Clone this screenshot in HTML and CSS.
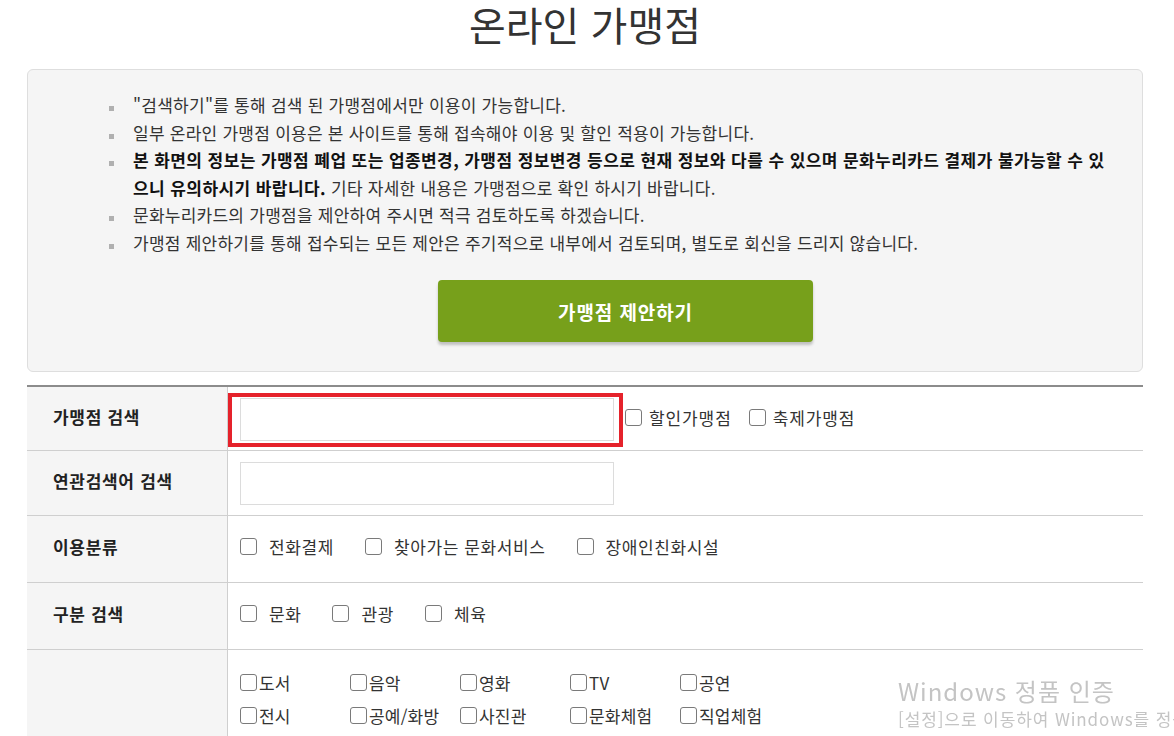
FILE: index.html
```html
<!DOCTYPE html>
<html lang="ko">
<head>
<meta charset="utf-8">
<title>온라인 가맹점</title>
<link rel="stylesheet" href="styles.css">
</head>
<body>
<div class="page">
  <h1 class="title">온라인 가맹점</h1>

  <div class="notice">
    <ul class="notice-list">
      <li>"검색하기"를 통해 검색 된 가맹점에서만 이용이 가능합니다.</li>
      <li>일부 온라인 가맹점 이용은 본 사이트를 통해 접속해야 이용 및 할인 적용이 가능합니다.</li>
      <li><strong>본 화면의 정보는 가맹점 폐업 또는 업종변경, 가맹점 정보변경 등으로 현재 정보와 다를 수 있으며 문화누리카드 결제가 불가능할 수 있으니 유의하시기 바랍니다.</strong> 기타 자세한 내용은 가맹점으로 확인 하시기 바랍니다.</li>
      <li>문화누리카드의 가맹점을 제안하여 주시면 적극 검토하도록 하겠습니다.</li>
      <li>가맹점 제안하기를 통해 접수되는 모든 제안은 주기적으로 내부에서 검토되며, 별도로 회신을 드리지 않습니다.</li>
    </ul>
    <div class="notice-action">
      <a class="btn-suggest" href="#">가맹점 제안하기</a>
    </div>
  </div>

  <table class="search-table">
    <tr class="row-first">
      <th>가맹점 검색</th>
      <td>
        <div class="field-line">
          <span class="input-wrap">
            <input class="text-input" type="text">
            <span class="highlight"></span>
          </span>
          <label class="check-inline"><input type="checkbox" class="cb">할인가맹점</label>
          <label class="check-inline"><input type="checkbox" class="cb">축제가맹점</label>
        </div>
      </td>
    </tr>
    <tr class="row-second">
      <th>연관검색어 검색</th>
      <td><input class="text-input" type="text"></td>
    </tr>
    <tr class="row-mid">
      <th>이용분류</th>
      <td>
        <div class="check-line">
          <label class="check"><input type="checkbox" class="cb">전화결제</label>
          <label class="check"><input type="checkbox" class="cb">찾아가는 문화서비스</label>
          <label class="check"><input type="checkbox" class="cb">장애인친화시설</label>
        </div>
      </td>
    </tr>
    <tr class="row-mid">
      <th>구분 검색</th>
      <td>
        <div class="check-line">
          <label class="check"><input type="checkbox" class="cb">문화</label>
          <label class="check"><input type="checkbox" class="cb">관광</label>
          <label class="check"><input type="checkbox" class="cb">체육</label>
        </div>
      </td>
    </tr>
    <tr class="row-tall">
      <th></th>
      <td>
        <div class="check-grid">
          <label class="check-tight"><input type="checkbox" class="cb">도서</label>
          <label class="check-tight"><input type="checkbox" class="cb">음악</label>
          <label class="check-tight"><input type="checkbox" class="cb">영화</label>
          <label class="check-tight"><input type="checkbox" class="cb">TV</label>
          <label class="check-tight"><input type="checkbox" class="cb">공연</label>
          <label class="check-tight"><input type="checkbox" class="cb">전시</label>
          <label class="check-tight"><input type="checkbox" class="cb">공예/화방</label>
          <label class="check-tight"><input type="checkbox" class="cb">사진관</label>
          <label class="check-tight"><input type="checkbox" class="cb">문화체험</label>
          <label class="check-tight"><input type="checkbox" class="cb">직업체험</label>
        </div>
      </td>
    </tr>
  </table>
</div>

<div class="activation">
  <div class="activation-title">Windows 정품 인증</div>
  <div class="activation-sub">[설정]으로 이동하여 Windows를 정품 인증합니다.</div>
</div>
</body>
</html>
```

FILE: styles.css
```css
html, body {
  margin: 0;
  padding: 0;
  background: #fff;
}

body {
  font-family: "Noto Sans CJK KR", "Noto Sans", sans-serif;
  color: #333;
  font-size: 16px;
}

.page {
  width: 1116px;
  margin-left: 27px;
}

.title {
  margin: 0 0 22px;
  padding-top: 1px;
  line-height: 46px;
  font-size: 40px;
  font-weight: 400;
  color: #333;
  text-align: center;
}

.notice {
  background: #f5f5f5;
  border: 1px solid #dedede;
  border-radius: 6px;
  padding: 21px 0 29px;
}

.notice-list {
  list-style: none;
  margin: 0;
  padding: 0 28px 0 81px;
}

.notice-list li {
  position: relative;
  padding-left: 24px;
  line-height: 27.5px;
  font-size: 17px;
  color: #333;
  letter-spacing: 0.25px;
}

.notice-list li::before {
  content: "";
  position: absolute;
  left: 0;
  top: 15px;
  width: 5px;
  height: 5px;
  background: #b0b0b0;
}

.notice-list strong {
  font-weight: 700;
  color: #111;
  letter-spacing: 0.42px;
}

.notice-action {
  display: flex;
  justify-content: center;
  padding-left: 81px;
  margin-top: 24px;
}

.btn-suggest {
  display: flex;
  align-items: center;
  justify-content: center;
  width: 375px;
  height: 62px;
  background: #77a01b;
  border-radius: 4px;
  box-shadow: 0 3px 3px rgba(0, 0, 0, 0.22);
  color: #fff;
  font-size: 19px;
  font-weight: 700;
  letter-spacing: 0.9px;
  text-decoration: none;
}

.search-table {
  width: 100%;
  margin-top: 13px;
  border-collapse: collapse;
  border-top: 2px solid #8c8c8c;
}

.search-table th,
.search-table td {
  border-bottom: 1px solid #cfcfcf;
  padding: 0;
  vertical-align: middle;
}

.search-table th {
  width: 174px;
  padding-left: 26px;
  padding-bottom: 5px;
  background: #f5f5f5;
  border-right: 1px solid #cfcfcf;
  text-align: left;
  font-size: 17px;
  font-weight: 700;
  letter-spacing: 0.7px;
  color: #222;
}

.search-table td {
  padding-left: 12px;
}

.row-first th {
  height: 58px;
}

.row-first td {
  height: 61px;
  padding-top: 2px;
}

.row-second th {
  height: 59px;
}

.row-second td {
  height: 63px;
  padding-top: 1px;
}

.row-mid th,
.row-mid td {
  height: 61px;
}

.row-mid td {
  padding-bottom: 5px;
}

.row-tall th,
.row-tall td {
  height: 100px;
  vertical-align: top;
}

.field-line {
  display: flex;
  align-items: center;
}

.input-wrap {
  position: relative;
  display: block;
}

.text-input {
  display: block;
  box-sizing: border-box;
  width: 374px;
  height: 43px;
  border: 1px solid #dcdcdc;
  background: #fff;
  margin: 0;
}

.highlight {
  position: absolute;
  left: -12px;
  right: -9px;
  top: -5px;
  bottom: -6px;
  border: 4px solid #e5222b;
  pointer-events: none;
}

.cb {
  appearance: none;
  -webkit-appearance: none;
  box-sizing: border-box;
  width: 17px;
  height: 17px;
  margin: 0;
  border: 1px solid #7a7a7a;
  border-radius: 3px;
  background: #fff;
  flex: none;
}

.check-inline {
  display: flex;
  align-items: center;
  gap: 7px;
  margin-bottom: 5px;
  font-size: 17px;
  letter-spacing: 0.9px;
  color: #333;
}

.check-inline:first-of-type {
  margin-left: 11px;
}

.check-inline + .check-inline {
  margin-left: 17px;
}

.check-line {
  display: flex;
  align-items: center;
  gap: 31px;
}

.check {
  display: flex;
  align-items: center;
  gap: 12px;
  font-size: 17px;
  letter-spacing: 0.6px;
  color: #333;
}

.check-grid {
  display: grid;
  grid-template-columns: repeat(5, 110px);
  grid-auto-rows: 33px;
  padding-top: 16px;
}

.check-tight {
  display: flex;
  align-items: center;
  gap: 2px;
  font-size: 17px;
  color: #333;
  letter-spacing: 0.2px;
}

.activation {
  position: fixed;
  left: 898px;
  top: 674px;
  white-space: nowrap;
  font-family: "Noto Sans CJK KR", "Open Sans", sans-serif;
  color: #c4c4c4;
  pointer-events: none;
}

.activation-title {
  font-size: 24px;
  line-height: 34px;
  font-weight: 400;
  letter-spacing: 1px;
}

.activation-sub {
  font-size: 17px;
  line-height: 22px;
  letter-spacing: 0.9px;
}
```
